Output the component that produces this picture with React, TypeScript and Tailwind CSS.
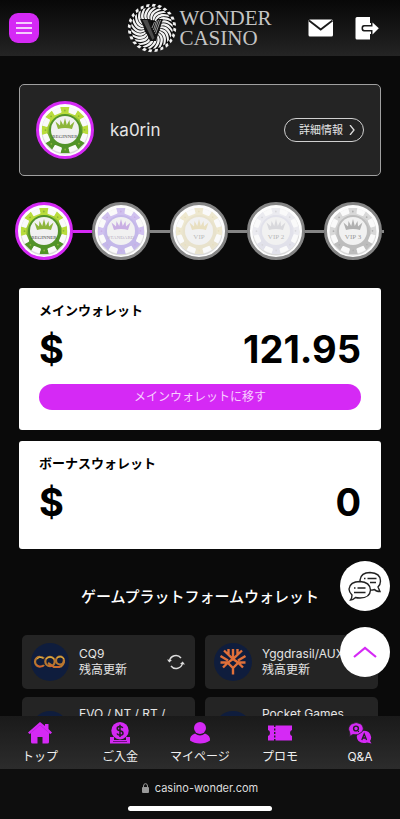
import { clsx } from "clsx";

const JP_SANS = "font-[Inter,'Noto_Sans_CJK_JP',sans-serif]";

const blades = Array.from({ length: 24 }, (_, i) => i * 15);
const notches = Array.from({ length: 8 }, (_, i) => i * 45 + 22);

function LogoMark() {
    return (
        <svg viewBox="-25 -25 50 50" className="size-[50px]" aria-hidden="true">
            <circle r="23" fill="#0a0a0a" />
            {blades.map((a) => (
                <g key={a} transform={`rotate(${a})`} fill="#f2f2f2">
                    <path d="M6 -5 C10 -9 15 -9 20.500 -3.500 L20.800 -0.800 C15 -6 11 -6.500 7 -3.800 Z" />
                    <path d="M21.500 -0.500 L24.200 0.800 L23.800 4 L21.200 2.600 Z" />
                </g>
            ))}
            <path d="M-12 -9 H-2 L2 3 L5 -9 H11 L4 13 H-2 Z" fill="#121212" />
            <path d="M-9.500 -8 H-4.500 L2.500 10 L0.500 12 Z" fill="#4a4a4a" />
            <path d="M8.500 -8 L3.500 6 M6.500 -8 L2.500 4 M4.500 -7 L1.500 2 M2.500 -6 L0 0" stroke="#bbb" strokeWidth="0.8" />
        </svg>
    );
}

type ChipProps = {
    label: string;
    light: string;
    dark: string;
    crown: string;
    text: string;
    ring: string;
};

function Chip({ label, light, dark, crown, text, ring }: ChipProps) {
    const id = `chip-${label.replace(" ", "")}`;
    return (
        <svg viewBox="-29 -29 58 58" className="size-full" role="img" aria-label={label}>
            <defs>
                <linearGradient id={id} x1="0" y1="0" x2="0.3" y2="1">
                    <stop offset="0.25" stopColor={light} />
                    <stop offset="0.75" stopColor={dark} />
                </linearGradient>
            </defs>
            <circle r="27.5" fill="#fdfdfd" />
            <circle cy="1" r="23.5" fill="#d9d9d9" />
            <circle r="23" fill="#f7f7f7" />
            <circle r="19" fill={`url(#${id})`} />
            {notches.map((a) => (
                <g key={a} transform={`rotate(${a})`}>
                    <path
                        d="M-4.500 -23 H4.500 L3.500 -17.500 H-3.500 Z"
                        transform="rotate(22.5)"
                        fill={a > 90 && a < 240 ? dark : light}
                    />
                    <rect x="-4" y="-22" width="8" height="4.500" rx="1" fill="#fafafa" />
                    <circle cy="-19.500" r="0.9" transform="rotate(22.5)" fill={crown} />
                </g>
            ))}
            <circle r="16" fill={dark} />
            <circle r="14" fill="#f1f1f1" />
            <path
                d="M-7 -1 L-9.500 -8.500 L-5 -4.500 L-4.500 -10 L-1.800 -5 L0 -12 L1.800 -5 L4.500 -10 L5 -4.500 L9.500 -8.500 L7 -1 Q0 -3 -7 -1 Z"
                fill={crown}
            />
            <text
                y="8"
                textAnchor="middle"
                fontSize={label.length > 6 ? 5 : 7}
                fontFamily="Liberation Serif, serif"
                fill={text}
            >
                {label}
            </text>
            <circle r="27.5" fill="none" stroke={ring} strokeWidth="3" />
        </svg>
    );
}

const beginner = { label: "BEGINNER", light: "#b9dc3c", dark: "#529329", crown: "#8db53a", text: "#444", ring: "#d529f5" };

const levels: ChipProps[] = [
    beginner,
    { label: "STANDARD", light: "#d0c1ef", dark: "#c4b8e9", crown: "#c9aee3", text: "#b8b0c4", ring: "#858585" },
    { label: "VIP", light: "#eee8cf", dark: "#e8e2cc", crown: "#e8dfc0", text: "#bbb", ring: "#858585" },
    { label: "VIP 2", light: "#ebebf0", dark: "#e1e1ea", crown: "#d8d8dc", text: "#b8b8b8", ring: "#858585" },
    { label: "VIP 3", light: "#d8d8d8", dark: "#bdbdbd", crown: "#b0b0b0", text: "#999", ring: "#858585" },
];

function Header() {
    return (
        <header className="flex h-14 shrink-0 items-center justify-between bg-linear-to-b from-[#080808] to-[#242424] pr-5 pl-[9px]">
            <button aria-label="メニュー" className="flex size-[30px] items-center justify-center rounded-[9px] bg-[#d529f5]">
                <svg viewBox="0 0 16 12" className="h-3 w-4" stroke="#fff" strokeWidth="1.6" aria-hidden="true">
                    <path d="M0 1 H16 M0 6 H16 M0 11 H16" />
                </svg>
            </button>
            <a href="#" className="ml-[52px] flex items-center gap-0.5">
                <LogoMark />
                <span className="flex flex-col font-['Liberation_Serif',serif] text-[21px] leading-5 text-[#c4c4c4]">
                    <span>WONDER</span>
                    <span>CASINO</span>
                </span>
            </a>
            <div className="flex items-center gap-5">
                <button aria-label="メール">
                    <svg viewBox="0 0 26 18" className="h-[18px] w-[26px]" aria-hidden="true">
                        <rect x="0.5" y="0.5" width="24.5" height="17" rx="1.5" fill="#fff" />
                        <path d="M1 1.5 L12.7 10.5 L24.5 1.5" fill="none" stroke="#1a1a1a" strokeWidth="1.8" />
                    </svg>
                </button>
                <button aria-label="ログアウト">
                    <svg viewBox="0 0 26 24" className="h-6 w-[26px]" aria-hidden="true">
                        <path d="M3 1 H16 V7 H18 V18 H16 V23.500 H3 Q1.500 23.500 1.500 22 V2.500 Q1.500 1 3 1 Z" fill="#fff" />
                        <path
                            d="M17 4 L26 12.300 L17 20.500 V15.500 H10 Q7.500 15.500 7.500 12.300 Q7.500 9 10 9 H17 Z"
                            fill="#1a1a1a"
                        />
                        <path d="M18.500 6.500 L24.800 12.300 L18.500 18.500 V14 H10.500 Q9 14 9 12.300 Q9 10.600 10.500 10.600 H18.500 Z" fill="#fff" />
                    </svg>
                </button>
            </div>
        </header>
    );
}

function WalletCard({ title, amount, action }: { title: string; amount: string; action?: string }) {
    return (
        <section className="rounded-[3px] bg-white px-5 pt-3 pb-5 text-black">
            <h2 className="text-[13px] leading-5 font-bold">{title}</h2>
            <p className="flex justify-between pt-1 pb-0.5 text-[38px] leading-[50px] font-bold">
                <span>$</span>
                <span>{amount}</span>
            </p>
            {action && (
                <button className="mt-2 block w-full rounded-full bg-[#d529f5] text-xs leading-[26px] text-[#f8cfff]">{action}</button>
            )}
        </section>
    );
}

function Cq9Logo() {
    return (
        <svg viewBox="0 0 38 38" className="size-[38px]" fill="none" aria-hidden="true">
            <circle cx="19" cy="19" r="19" fill="#0f1d3d" />
            <g stroke="#b9772f" strokeWidth="2.2">
                <path d="M13 15.500 Q11.500 14 9.500 14 A4.800 4.800 0 1 0 9.500 23.500 Q12 23.500 13 22" />
                <circle cx="19" cy="18.500" r="4.700" />
                <path d="M17 20 L23 24 H28 Q33 23 33 17" />
                <circle cx="29" cy="17.500" r="4" />
            </g>
            <path d="M6 16 Q8 13 12 15 M15 16 Q19 12 23 16 M26 15 Q30 12 33 16" stroke="#e0c34b" strokeWidth="0.900" />
            <path d="M6 22 Q9 25 12 23 M18 22 L23 24 M25 24 H29" stroke="#e65332" strokeWidth="0.900" />
        </svg>
    );
}

function YggdrasilLogo() {
    return (
        <svg viewBox="0 0 38 38" className="size-[38px]" fill="none" aria-hidden="true">
            <circle cx="19" cy="19" r="19" fill="#0f1d3d" />
            <g stroke="#e0703a" strokeWidth="2.400">
                <path d="M19 6 V15 M10 7.500 L19 16 L28 7.500 M14.500 6 V11 M23.500 6 V11" />
                <path d="M6.500 13 L14 17.500 M31.500 13 L24 17.500 M6.500 19.500 H14 L19 16 L24 19.500 H31.500 M9 24.500 L14 19.500 M29 24.500 L24 19.500" />
                <path d="M19 31.500 V25 L14 20 M19 25 L24 20" />
            </g>
        </svg>
    );
}

function BlankLogo() {
    return <span className="block size-[38px] rounded-full bg-[#0f1d3d]" />;
}

function RefreshIcon() {
    return (
        <svg viewBox="0 0 18 16" className="h-4 w-[18px]" fill="none" stroke="#ddd" strokeWidth="1.500" aria-hidden="true">
            <path d="M2.500 7 A6.500 6.500 0 0 1 14 4 M15.500 9 A6.500 6.500 0 0 1 4 12" />
            <path d="M0 5.500 L2.300 8.500 L5 6 Z M18 10.500 L15.700 7.500 L13 10 Z" fill="#ddd" stroke="none" />
        </svg>
    );
}

const platforms = [
    { name: "CQ9", Logo: Cq9Logo },
    { name: "Yggdrasil/AUX", Logo: YggdrasilLogo },
    { name: "EVO / NT / RT /", Logo: BlankLogo, tall: true },
    { name: "Pocket Games", Logo: BlankLogo, tall: true },
];

function HomeIcon() {
    return (
        <svg viewBox="0 0 24 22" className="h-[22px] w-6" fill="#d529f5" aria-hidden="true">
            <path d="M12 0 L17 4 V2 H20.500 V7 L24 10.500 L22.500 12 L21 11 V20 Q21 21.500 19.500 21.500 H14.500 V15 H9.500 V21.500 H4.500 Q3 21.500 3 20 V11 L1.500 12 L0 10.500 Z" />
            <path d="M2 11.500 L12 3 L22 11.500" fill="none" stroke="#b41bd2" strokeWidth="0.600" />
        </svg>
    );
}

function DepositIcon() {
    return (
        <svg viewBox="0 0 24 22" className="h-[22px] w-6" aria-hidden="true">
            <path d="M2 15 H6 V18 H18 V15 H22 V21.500 H2 Z" fill="#d529f5" />
            <circle cx="12" cy="8.700" r="8.700" fill="#d529f5" />
            <path d="M5 19.500 H19" stroke="#711083" />
            <path
                d="M14.800 6 Q14 4.500 12 4.500 Q9.200 4.500 9.200 6.500 Q9.200 8.200 12 8.700 Q15 9.200 15 11.200 Q15 13.200 12 13.200 Q9.700 13.200 9 11.500 M12 2.800 V15"
                fill="none"
                stroke="#222"
                strokeWidth="1.500"
            />
        </svg>
    );
}

function UserIcon() {
    return (
        <svg viewBox="0 0 22 22" className="size-[22px]" fill="#d529f5" aria-hidden="true">
            <circle cx="11" cy="6" r="6" />
            <path d="M6 11.500 Q11 15.500 16 11.500 Q21.500 13.500 21 18.500 Q17 21.500 11 21.500 Q5 21.500 1 18.500 Q0.500 13.500 6 11.500 Z" />
        </svg>
    );
}

function TicketIcon() {
    return (
        <svg viewBox="0 0 26 22" className="h-[22px] w-[26px]" fill="#d529f5" aria-hidden="true">
            <path d="M1 3.500 H7 V5 H8.500 V3.500 H25 V8 Q23 8.500 23 11 Q23 13.500 25 14 V18.500 H8.500 V17 H7 V18.500 H1 V14 Q3 13.500 3 11 Q3 8.500 1 8 Z" />
            <path d="M7.700 6.500 V8.500 M7.700 10 V12 M7.700 13.500 V15.500" stroke="#222" strokeWidth="1.400" />
        </svg>
    );
}

function QaIcon() {
    return (
        <svg viewBox="0 0 24 22" className="h-[22px] w-6" fill="#d529f5" aria-hidden="true">
            <path d="M22 19 L23.500 21.500 L19 20.500 Q14 22 10.500 19 Q7 14.500 10.500 11 Q15 7 20.500 10 Q25 14 22 19 Z" />
            <path d="M2 12.500 L1.500 10 Q-1 5 3.500 2 Q8 -1 13 2 Q17 6 14 10 Q10 14 5 12.500 L1 14.500 Z" stroke="#242424" strokeWidth="0.800" />
            <circle cx="8" cy="6.500" r="2.400" fill="none" stroke="#222" strokeWidth="1.400" />
            <path d="M9 8 L11 10" stroke="#222" />
            <path d="M13.800 18 L16.200 12 L18.600 18 M14.700 16 H17.700" fill="none" stroke="#222" strokeWidth="1.300" />
        </svg>
    );
}

const navItems = [
    { label: "トップ", Icon: HomeIcon },
    { label: "ご入金", Icon: DepositIcon },
    { label: "マイページ", Icon: UserIcon },
    { label: "プロモ", Icon: TicketIcon },
    { label: "Q&A", Icon: QaIcon },
];

export default function App() {
    return (
        <div className={clsx("flex h-screen flex-col overflow-hidden bg-[#0a0a0a] text-white", JP_SANS)}>
            <Header />

            <main className="min-h-0 flex-1 overflow-y-auto [scrollbar-width:none]">
                {/* Profile */}
                <section className="mx-[19px] mt-7 flex h-[92px] items-center rounded-[5px] border border-[#a0a0a0] bg-[#242424] px-4">
                    <div className="size-[58px]">
                        <Chip {...beginner} />
                    </div>
                    <p className="ml-4 flex-1 text-[17px] leading-6 text-[#e5e5e5]">ka0rin</p>
                    <button className="flex h-6 items-center gap-1 rounded-full border border-[#d0d0d0] pr-1.5 pl-3.5 text-[11px] text-[#e5e5e5]">
                        詳細情報
                        <svg viewBox="0 0 10 10" className="size-2.5" fill="none" stroke="#ddd" strokeWidth="1.300" aria-hidden="true">
                            <path d="M3 0 L7 5 L3 10" />
                        </svg>
                    </button>
                </section>

                {/* Membership levels */}
                <ol className="mt-[26px] mr-4 ml-[15px] flex items-center">
                    {levels.map((level, i) => (
                        <li key={level.label} className={clsx("flex items-center", i < levels.length - 1 && "flex-1")}>
                            <div className="size-[58px] shrink-0">
                                <Chip {...level} />
                            </div>
                            <span className={clsx("h-[3px]", i === 0 ? "bg-[#d529f5]" : "bg-[#858585]", i < levels.length - 1 ? "flex-1" : "w-0.5")} />
                        </li>
                    ))}
                </ol>

                {/* Wallets */}
                <div className="mx-[19px] mt-7 flex flex-col gap-[11px]">
                    <WalletCard title="メインウォレット" amount="121.95" action="メインウォレットに移す" />
                    <WalletCard title="ボーナスウォレット" amount="0" />
                </div>

                <h2 className="mt-9 text-center text-[15px] leading-6 font-medium">ゲームプラットフォームウォレット</h2>
                <ul className="mx-[22px] mt-[26px] grid grid-cols-2 gap-x-2.5 gap-y-2 pb-6">
                    {platforms.map(({ name, Logo, tall }) => (
                        <li
                            key={name}
                            className={clsx("flex items-center rounded-[5px] bg-[#242424] pr-2.5 pl-[9px]", tall ? "h-[66px]" : "h-[54px]")}
                        >
                            <Logo />
                            <p className="ml-2.5 flex flex-1 flex-col text-xs leading-4 whitespace-nowrap text-[#e5e5e5]">
                                <span className={clsx(tall && "h-8")}>{name}</span>
                                <span>残高更新</span>
                            </p>
                            <button aria-label={`${name} 残高更新`}>
                                <RefreshIcon />
                            </button>
                        </li>
                    ))}
                </ul>
            </main>

            {/* Floating buttons */}
            <div className="fixed right-2.5 bottom-[142px] flex flex-col gap-4">
                <button aria-label="チャット" className="flex size-[50px] items-center justify-center rounded-full bg-white">
                    <svg viewBox="0 0 34 30" className="h-[30px] w-[34px]" fill="#fff" stroke="#222" strokeWidth="1.400" aria-hidden="true">
                        <path d="M12 9 Q13 1.500 22 1.500 Q32.500 2 32.500 10 Q32.500 13.500 30 16 L32 20.500 Q28 20.500 26.500 18.500 Q24 19.500 21 19 Q12 18 12 9 Z" />
                        <path d="M16 7.500 H17.500 M19.500 7.500 H28.500 M22 11.500 H28" />
                        <path d="M4 24 Q1 21 1 18 Q2 10.500 12 10.500 Q22 11 22.500 19 Q22 27 12 27 Q9 27 7.500 26.500 Q5 29 2.500 29 Q4 27 4 24 Z" />
                        <path d="M6 17 H7.500 M9.500 17 H17.500 M6 21.500 H17.500" />
                    </svg>
                </button>
                <button aria-label="ページの先頭へ" className="flex size-[50px] items-center justify-center rounded-full bg-white">
                    <svg viewBox="0 0 24 12" className="h-3 w-6" fill="none" stroke="#d529f5" strokeWidth="2.200" aria-hidden="true">
                        <path d="M1 11 L12 2 L23 11" />
                    </svg>
                </button>
            </div>

            <nav className="grid h-[53px] shrink-0 grid-cols-5 bg-linear-to-b from-[#1a1a1a] to-[#2c2c2c]">
                {navItems.map(({ label, Icon }) => (
                    <a key={label} href="#" className="flex flex-col items-center gap-1 pt-1.5 text-xs leading-[18px] whitespace-nowrap text-[#f0f0f0]">
                        <Icon />
                        {label}
                    </a>
                ))}
            </nav>

            {/* Browser bar */}
            <footer className="flex h-[50px] shrink-0 flex-col items-center bg-[#0e0e0e] pt-2.5">
                <p className="flex items-center gap-1.5 text-[11px] leading-[18px] text-[#ddd]">
                    <svg viewBox="0 0 7 10" className="h-2.5 w-[7px]" aria-hidden="true">
                        <rect y="4" width="7" height="6" rx="1" fill="#999" />
                        <path d="M1.500 4.500 V3 Q1.500 0.700 3.500 0.700 Q5.500 0.700 5.500 3 V4.500" fill="none" stroke="#999" />
                    </svg>
                    casino-wonder.com
                </p>
                <div className="mt-[9px] h-[5px] w-36 rounded-full bg-white" />
            </footer>
        </div>
    );
}
